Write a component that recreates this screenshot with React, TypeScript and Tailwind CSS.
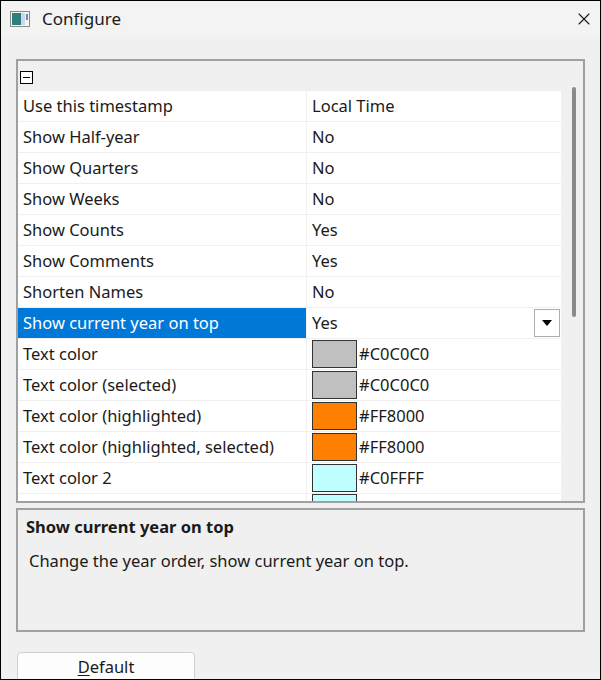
import { X } from "lucide-react";

const rows: { label: string; value: string; color?: string; selected?: boolean }[] = [
  { label: "Use this timestamp", value: "Local Time" },
  { label: "Show Half-year", value: "No" },
  { label: "Show Quarters", value: "No" },
  { label: "Show Weeks", value: "No" },
  { label: "Show Counts", value: "Yes" },
  { label: "Show Comments", value: "Yes" },
  { label: "Shorten Names", value: "No" },
  { label: "Show current year on top", value: "Yes", selected: true },
  { label: "Text color", value: "#C0C0C0", color: "#c0c0c0" },
  { label: "Text color (selected)", value: "#C0C0C0", color: "#c0c0c0" },
  { label: "Text color (highlighted)", value: "#FF8000", color: "#ff8000" },
  { label: "Text color (highlighted, selected)", value: "#FF8000", color: "#ff8000" },
  { label: "Text color 2", value: "#C0FFFF", color: "#c0ffff" },
];

const App = () => (
  <div
    className="w-[601px] h-[680px] overflow-hidden border border-black bg-[#f0f0f0] text-[16.5px] text-[#1a1a1a] flex flex-col"
    style={{ fontFamily: '"Noto Sans", "Open Sans", sans-serif' }}
  >
    {/* title bar */}
    <div className="h-[36px] shrink-0 flex items-center bg-[#f3f3f3] pl-[9px] pr-[6px]">
      <svg width="20" height="16" viewBox="0 0 20 16" className="mr-[12px]">
        <rect x="0.5" y="0.5" width="19" height="15" fill="#f4f4f4" stroke="#8a8a8a" />
        <rect x="2" y="2" width="9" height="12" fill="#2f7f7c" />
        <rect x="11" y="2" width="4" height="12" fill="#c8d8e8" />
        <rect x="16" y="3" width="2" height="6" fill="#6a8aa8" />
      </svg>
      <span className="text-[17px]">Configure</span>
      <X size={20} strokeWidth={1.3} className="ml-auto" />
    </div>

    <div className="flex-1 flex flex-col px-[15px] pt-[22px]">
      {/* property grid */}
      <div className="h-[444px] shrink-0 border-2 border-[#a0a0a0] flex overflow-hidden">
        <div className="flex-1 flex flex-col overflow-hidden">
          <div className="h-[30px] shrink-0 flex items-center pl-[2px] pt-[2px] bg-[#f0f0f0]">
            <div className="w-[13px] h-[13px] border border-black bg-white flex items-center justify-center">
              <div className="w-[7px] h-[1px] bg-black" />
            </div>
          </div>
          {rows.map((r) => (
            <div key={r.label} className="h-[31px] shrink-0 flex bg-white border-b border-[#f0f0f0]">
              <div
                className={`w-[289px] shrink-0 flex items-center pl-[5px] border-r border-[#f0f0f0] ${
                  r.selected ? "bg-[#0078d7] text-white" : ""
                }`}
              >
                {r.label}
              </div>
              <div className="flex-1 flex items-center pl-[5px]">
                {r.color && (
                  <div
                    className="w-[45px] h-[28px] border border-[#333] mr-[2px]"
                    style={{ backgroundColor: r.color }}
                  />
                )}
                <span>{r.value}</span>
                {r.selected && (
                  <div className="ml-auto mr-[1px] w-[26px] h-[28px] border border-[#adadad] bg-white flex items-center justify-center">
                    <svg width="10" height="6" viewBox="0 0 10 6">
                      <path d="M0 0 H10 L5 6 Z" fill="#000" />
                    </svg>
                  </div>
                )}
              </div>
            </div>
          ))}
          <div className="h-[10px] shrink-0 flex bg-white">
            <div className="w-[289px] shrink-0 border-r border-[#f0f0f0]" />
            <div className="pl-[5px]">
              <div className="w-[45px] h-[10px] border border-b-0 border-[#333] bg-[#c0ffff]" />
            </div>
          </div>
        </div>
        <div className="w-[22px] shrink-0 bg-[#f0f0f0] flex justify-center pt-[26px]">
          <div className="w-[4px] h-[230px] rounded-full bg-[#8a8a8a] ml-[4px]" />
        </div>
      </div>

      {/* description */}
      <div className="mt-[5px] h-[124px] shrink-0 border-2 border-[#a0a0a0] px-[8px] pt-[5px]">
        <div className="font-bold">Show current year on top</div>
        <div className="mt-[9px] pl-[3px]">Change the year order, show current year on top.</div>
      </div>

      <button className="mt-[20px] w-[178px] h-[34px] ml-[1px] bg-[#fdfdfd] border border-[#d0d0d0] rounded-[4px] pb-[4px]">
        <span className="underline underline-offset-2">D</span>efault
      </button>
    </div>
  </div>
);

export default App;
